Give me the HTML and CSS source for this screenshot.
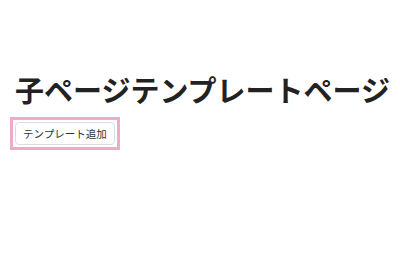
FILE: index.html
```html
<!DOCTYPE html>
<html>

<head>
    <meta name="viewport" content="width=device-width, initial-scale=1">
    <title>子ページテンプレートページ</title>
    <link rel="stylesheet" href="styles.css">
</head>

<body>
    <div class="container">
        <h1>子ページテンプレートページ</h1>
        <div class="highlight">
            <button class="button">テンプレート追加</button>
        </div>
    </div>
</body>

</html>
```

FILE: styles.css
```css
:root {
    --text-color: #222222;
    --button-text: #333333;
    --button-border: #dddddd;
    --highlight: #f0a9c9;
}

body {
    background-color: #ffffff;
    color: var(--text-color);
    font-family: "Noto Sans CJK JP", "Noto Sans", sans-serif;
    margin: 0;
    padding: 0;
}

.container {
    padding: 72px 10px 0 15px;
}

h1 {
    font-size: 29px;
    font-weight: bold;
    line-height: 34px;
    margin: 0 0 11px 0;
}

.highlight {
    display: inline-block;
    margin-left: -5px;
    padding: 2px;
    border: 3px solid var(--highlight);
}

.button {
    display: block;
    background-color: #ffffff;
    color: var(--button-text);
    border: 1px solid var(--button-border);
    border-radius: 4px;
    padding: 0 7px;
    height: 23px;
    font-family: "Noto Sans CJK JP", sans-serif;
    font-size: 10.5px;
    cursor: pointer;
}
```
